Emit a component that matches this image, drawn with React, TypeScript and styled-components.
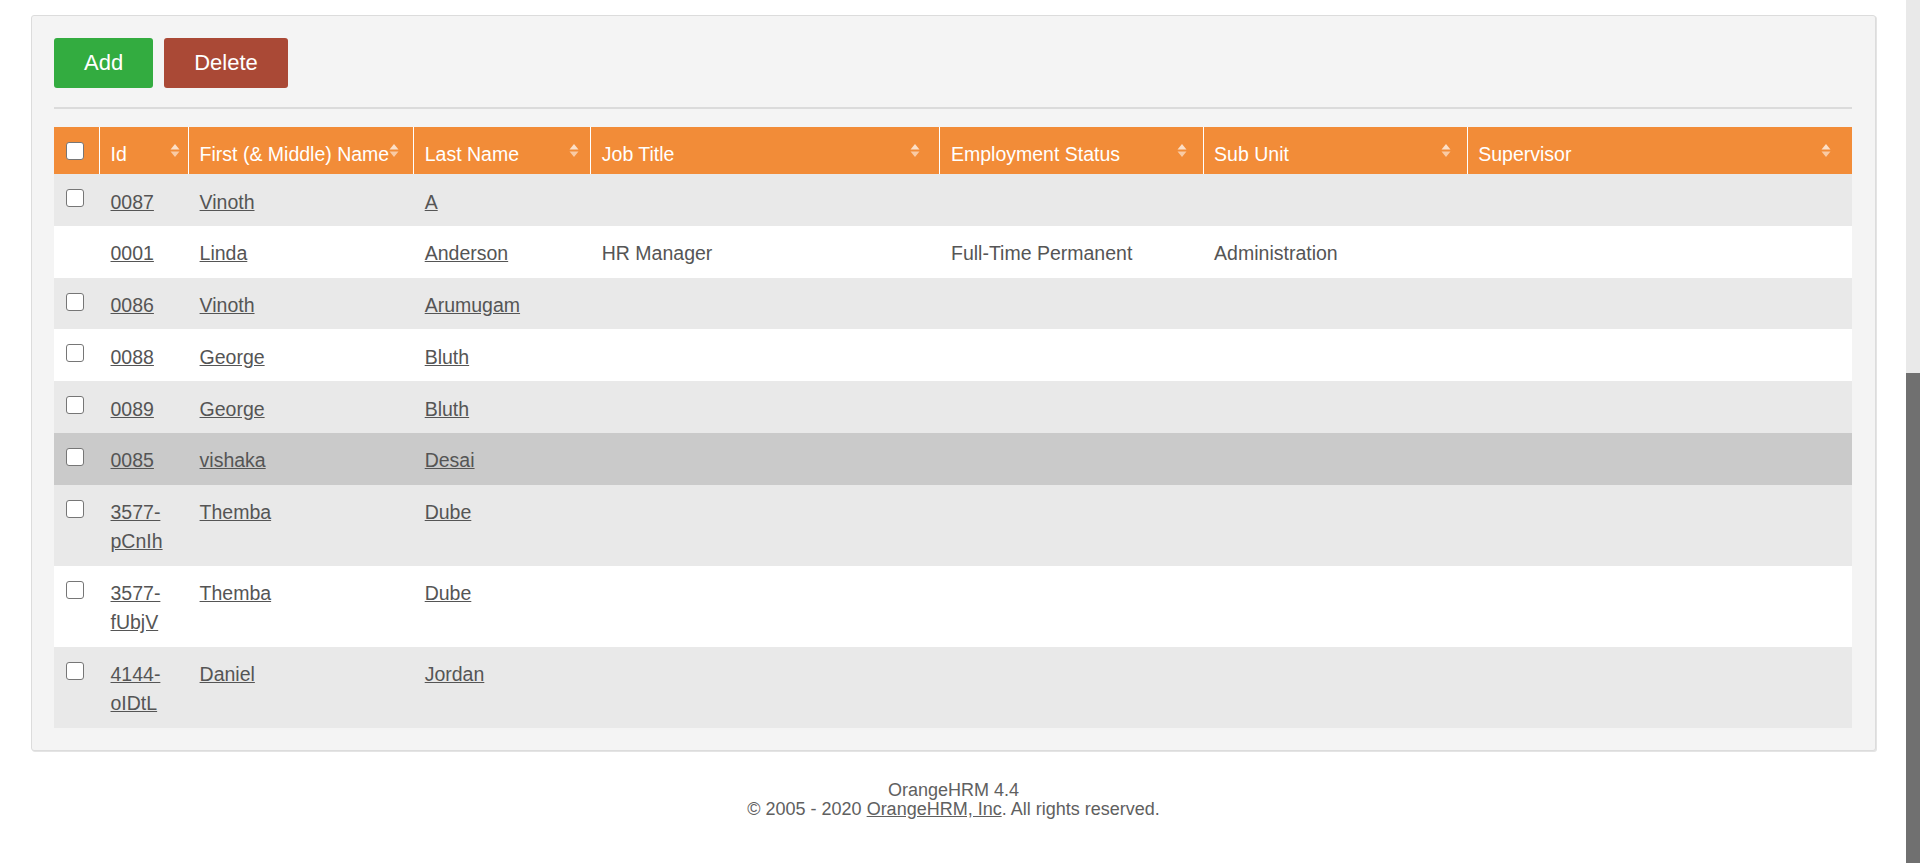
import React from "react";
import styled, { createGlobalStyle } from "styled-components";

const GlobalStyle = createGlobalStyle`
  html, body {
    margin: 0;
    padding: 0;
    background: #ffffff;
    overflow: hidden;
  }
  body {
    font-family: "Liberation Sans", Arial, sans-serif;
  }
  * { box-sizing: border-box; }
`;

const Page = styled.div`
  display: flex;
  height: 863px;
  width: 1920px;
`;

const Main = styled.main`
  flex: 1;
  padding: 15px 30px 0 31px;
`;

const ScrollTrack = styled.div`
  width: 14px;
  background: #e9e9e9;
  display: flex;
  flex-direction: column;
  padding-top: 373px;
`;

const ScrollThumb = styled.div`
  flex: 1;
  background: #707070;
`;

const Panel = styled.section`
  background: #f4f4f4;
  border: 1px solid #dcdcdc;
  border-radius: 3px;
  box-shadow: 1px 1px 0 #e4e4e4;
  padding: 22px 23px 22px 22px;
`;

const Toolbar = styled.div`
  display: flex;
  gap: 11px;
`;

const Button = styled.button<{ $variant: "add" | "delete" }>`
  height: 50px;
  padding: 0 30px;
  border: none;
  border-radius: 3px;
  font-family: "Liberation Sans", Arial, sans-serif;
  font-size: 22px;
  color: #ffffff;
  background: ${(p) => (p.$variant === "add" ? "#33ac40" : "#aa4936")};
  cursor: pointer;
`;

const Divider = styled.hr`
  border: none;
  height: 2px;
  background: #dbdbdb;
  margin: 19px 0 18px;
`;

const Table = styled.table`
  width: 100%;
  table-layout: fixed;
  border-collapse: separate;
  border-spacing: 0;
  font-size: 19.5px;
`;

const HeadCell = styled.th`
  background: #f28c38;
  color: #ffffff;
  font-weight: normal;
  text-align: left;
  height: 47px;
  padding: 0 0 0 10.5px;
  border-right: 1px solid #ffffff;
  &:last-child { border-right: none; }
`;

const CheckHeadCell = styled(HeadCell)`
  padding: 0 0 0 11.5px;
  vertical-align: middle;
`;

const HeadInner = styled.div`
  display: flex;
  height: 47px;
`;

const HeadLabel = styled.span`
  align-self: flex-end;
  padding-bottom: 4.5px;
  line-height: 29.5px;
  white-space: nowrap;
`;

const SortIcon = styled.svg`
  align-self: center;
  flex: none;
  margin-left: auto;
  width: 10px;
  height: 15px;
`;

const Row = styled.tr<{ $tone: "odd" | "even" | "hover" }>`
  background: ${(p) =>
    p.$tone === "hover" ? "#cacaca" : p.$tone === "odd" ? "#e9e9e9" : "#ffffff"};
`;

const Cell = styled.td`
  padding: 13.5px 10.5px 9px;
  line-height: 29.25px;
  color: #555555;
  vertical-align: top;
`;

const CheckCell = styled.td`
  padding: 15px 0 0 11.5px;
  vertical-align: top;
`;

const Check = styled.input.attrs({ type: "checkbox" })`
  appearance: none;
  -webkit-appearance: none;
  display: block;
  margin: 0;
  width: 18px;
  height: 18px;
  border: 1px solid #767676;
  border-radius: 3px;
  background: #ffffff;
`;

const Link = styled.a`
  color: #555555;
  text-decoration: underline;
`;

const Footer = styled.footer`
  margin-top: 30px;
  text-align: center;
  font-size: 18px;
  line-height: 19.5px;
  color: #606060;
`;

const FooterLink = styled.a`
  color: #606060;
  text-decoration: underline;
`;

type Col = { key: string; label: string; width: number };

const columns: Col[] = [
  { key: "id", label: "Id", width: 89 },
  { key: "first", label: "First (& Middle) Name", width: 225 },
  { key: "last", label: "Last Name", width: 177 },
  { key: "job", label: "Job Title", width: 349 },
  { key: "status", label: "Employment Status", width: 263 },
  { key: "unit", label: "Sub Unit", width: 264 },
  { key: "sup", label: "Supervisor", width: 384 },
];

type Emp = {
  id: string;
  first: string;
  last: string;
  job?: string;
  status?: string;
  unit?: string;
  selectable: boolean;
};

const employees: Emp[] = [
  { id: "0087", first: "Vinoth", last: "A", selectable: true },
  {
    id: "0001",
    first: "Linda",
    last: "Anderson",
    job: "HR Manager",
    status: "Full-Time Permanent",
    unit: "Administration",
    selectable: false,
  },
  { id: "0086", first: "Vinoth", last: "Arumugam", selectable: true },
  { id: "0088", first: "George", last: "Bluth", selectable: true },
  { id: "0089", first: "George", last: "Bluth", selectable: true },
  { id: "0085", first: "vishaka", last: "Desai", selectable: true },
  { id: "3577-pCnIh", first: "Themba", last: "Dube", selectable: true },
  { id: "3577-fUbjV", first: "Themba", last: "Dube", selectable: true },
  { id: "4144-oIDtL", first: "Daniel", last: "Jordan", selectable: true },
];

const Sort = ({ width }: { width: number }) => (
  <SortIcon
    viewBox="0 0 10 15"
    style={{ marginRight: `${(0.047 * width + 3.4).toFixed(1)}px` }}
  >
    <polygon points="0.5,6.5 5,1 9.5,6.5" fill="#ffffff" fillOpacity="0.72" />
    <polygon points="0.5,8.5 5,14 9.5,8.5" fill="#ffffff" fillOpacity="0.55" />
  </SortIcon>
);

export default function App() {
  return (
    <>
      <GlobalStyle />
      <Page>
        <Main>
          <Panel>
            <Toolbar>
              <Button $variant="add">Add</Button>
              <Button $variant="delete">Delete</Button>
            </Toolbar>
            <Divider />
            <Table>
              <colgroup>
                <col style={{ width: 46 }} />
                {columns.map((c) => (
                  <col key={c.key} style={{ width: c.width }} />
                ))}
              </colgroup>
              <thead>
                <tr>
                  <CheckHeadCell>
                    <Check readOnly />
                  </CheckHeadCell>
                  {columns.map((c) => (
                    <HeadCell key={c.key}>
                      <HeadInner>
                        <HeadLabel>{c.label}</HeadLabel>
                        <Sort width={c.width} />
                      </HeadInner>
                    </HeadCell>
                  ))}
                </tr>
              </thead>
              <tbody>
                {employees.map((e, i) => (
                  <Row
                    key={e.id}
                    $tone={i === 5 ? "hover" : i % 2 === 0 ? "odd" : "even"}
                  >
                    <CheckCell>{e.selectable && <Check readOnly />}</CheckCell>
                    <Cell>
                      <Link href="#">{e.id}</Link>
                    </Cell>
                    <Cell>
                      <Link href="#">{e.first}</Link>
                    </Cell>
                    <Cell>
                      <Link href="#">{e.last}</Link>
                    </Cell>
                    <Cell>{e.job}</Cell>
                    <Cell>{e.status}</Cell>
                    <Cell>{e.unit}</Cell>
                    <Cell></Cell>
                  </Row>
                ))}
              </tbody>
            </Table>
          </Panel>
          <Footer>
            OrangeHRM 4.4
            <br />© 2005 - 2020 <FooterLink href="#">OrangeHRM, Inc</FooterLink>. All rights
            reserved.
          </Footer>
        </Main>
        <ScrollTrack>
          <ScrollThumb />
        </ScrollTrack>
      </Page>
    </>
  );
}
